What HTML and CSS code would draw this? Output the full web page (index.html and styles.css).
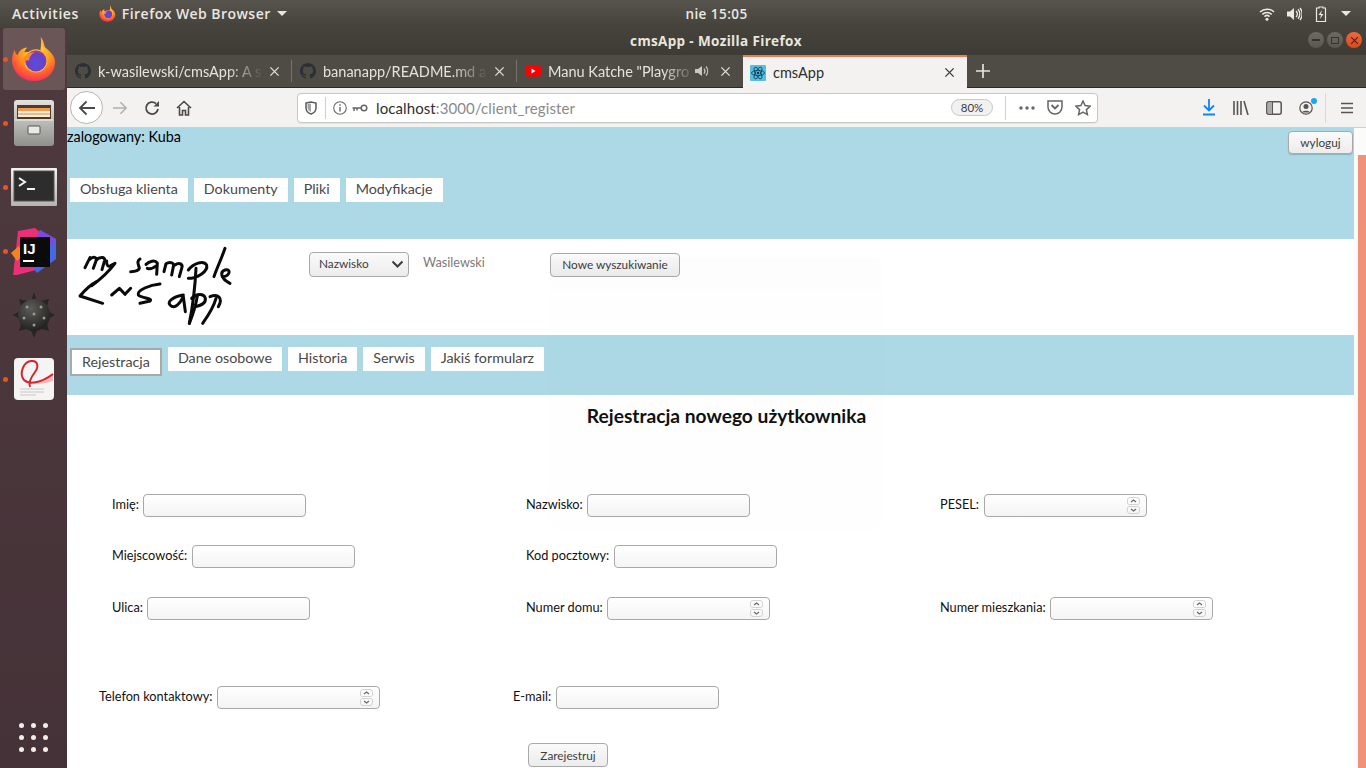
FILE: index.html
```html
<!DOCTYPE html>
<html lang="pl">
<head>
<meta charset="utf-8">
<title>cmsApp</title>
<link rel="stylesheet" href="styles.css">
</head>
<body>
<svg class="defs" width="0" height="0" aria-hidden="true">
  <defs>
    <radialGradient id="ffBody" cx="55%" cy="30%" r="80%">
      <stop offset="0" stop-color="#ffe14d"/><stop offset=".45" stop-color="#ff9a1f"/><stop offset=".75" stop-color="#ff4f3a"/><stop offset="1" stop-color="#e3177e"/>
    </radialGradient>
    <radialGradient id="ffGlobe" cx="50%" cy="60%" r="60%">
      <stop offset="0" stop-color="#5a50d8"/><stop offset=".7" stop-color="#6b3fc8"/><stop offset="1" stop-color="#a335b0"/>
    </radialGradient>
    <linearGradient id="cabinet" x1="0" y1="0" x2="0" y2="1">
      <stop offset="0" stop-color="#e2e2df"/><stop offset="1" stop-color="#8f8f8b"/>
    </linearGradient>
    <linearGradient id="termFrame" x1="0" y1="0" x2="0" y2="1">
      <stop offset="0" stop-color="#f2f2f0"/><stop offset="1" stop-color="#b4b4b1"/>
    </linearGradient>
    <radialGradient id="mine" cx="40%" cy="30%" r="75%">
      <stop offset="0" stop-color="#5c5c58"/><stop offset="1" stop-color="#1e1e1c"/>
    </radialGradient>
    <symbol id="firefox" viewBox="0 0 48 48">
      <path d="M31 1c5 6 2 9 6 12 5 4 9 9 9 14 0 12-10 20-22 20C11 47 2 38 1 26c0-4 1-9 3-12 0 3 1 5 3 6 1-5 6-8 10-8-2 2-3 4-3 5 5-1 12 0 16 3 1-6 2-13 1-19z" fill="url(#ffBody)"/>
      <path d="M14 22c3-6 9-9 14-8 6 1 10 6 10 12 0 7-6 12-12 12-7 0-12-5-12-10 2 1 5 1 6-1-2-1-5-2-6-5z" fill="#ffb52e"/>
      <circle cx="26" cy="26" r="11" fill="url(#ffGlobe)"/>
      <path d="M12 24c3-4 7-7 13-7-4 2-6 5-6 8-2 1-4 1-7-1z" fill="#ff8a24"/>
    </symbol>
    <symbol id="github" viewBox="0 0 16 16">
      <path fill="#2c3034" d="M8 0C3.6 0 0 3.6 0 8c0 3.5 2.3 6.5 5.5 7.6.4.1.5-.2.5-.4v-1.400c-2.200.5-2.700-1-2.700-1-.4-.9-.9-1.200-.9-1.200-.7-.5.1-.5.1-.5.8.1 1.200.8 1.200.8.7 1.200 1.900.9 2.300.7.1-.5.3-.9.5-1.100-1.800-.2-3.600-.9-3.600-4 0-.9.3-1.600.8-2.100-.1-.2-.4-1 .1-2.100 0 0 .7-.2 2.200.8.6-.2 1.300-.3 2-.3s1.400.1 2 .3c1.500-1 2.200-.8 2.200-.8.4 1.100.2 1.900.1 2.100.5.6.8 1.300.8 2.100 0 3.100-1.900 3.700-3.700 3.900.3.3.6.8.6 1.500v2.200c0 .2.1.5.6.4C13.700 14.500 16 11.500 16 8c0-4.400-3.600-8-8-8z"/>
    </symbol>
    <symbol id="close" viewBox="0 0 12 12">
      <path d="M1.500 1.500l9 9M10.500 1.500l-9 9" stroke="currentColor" stroke-width="1.500" fill="none"/>
    </symbol>
    <symbol id="spin" viewBox="0 0 13 17">
      <path d="M.5 3Q.5.500 3 .500H10Q12.500.500 12.500 3V6.500Q12 7.500 10 7.500H3Q1 7.500.5 6.500Z" fill="none" stroke="#c9c9c9" stroke-width=".8"/>
      <path d="M.5 10.500Q1 9.500 3 9.500H10Q12 9.500 12.500 10.500V14Q12.500 16.500 10 16.500H3Q.5 16.500.5 14Z" fill="none" stroke="#c9c9c9" stroke-width=".8"/>
      <path d="M4 5l2.500-2L9 5M4 12l2.500 2L9 12" fill="none" stroke="#666" stroke-width="1.100"/>
    </symbol>
  </defs>
</svg>

<header class="topbar">
  <div class="topbar-left">
    <span class="activities">Activities</span>
    <span class="appmenu">
      <svg class="appmenu-icon"><use href="#firefox"/></svg>
      Firefox Web Browser
      <i class="caret"></i>
    </span>
  </div>
  <div class="clock">nie 15:05</div>
  <div class="tray">
    <svg width="16" height="14" viewBox="0 0 16 14"><path d="M1 5a10 10 0 0 1 14 0M3.300 7.400a6.800 6.800 0 0 1 9.400 0M5.500 9.600a3.600 3.600 0 0 1 5 0" fill="none" stroke="#ece9e2" stroke-width="1.500"/><circle cx="8" cy="12.300" r="1.500" fill="#ece9e2"/></svg>
    <svg width="16" height="14" viewBox="0 0 16 14"><path d="M1 4.500h3L8 1v12L4 9.500H1z" fill="#ece9e2"/><path d="M10 4a4 4 0 0 1 0 6M12 2.300a7 7 0 0 1 0 9.400M14 1a9.500 9.500 0 0 1 0 12" fill="none" stroke="#ece9e2" stroke-width="1.300"/></svg>
    <svg width="12" height="16" viewBox="0 0 12 16"><path d="M4 1h4v1h2.500v13.500h-9V2H4z" fill="none" stroke="#ece9e2" stroke-width="1.200"/><path d="M7 4L3.500 9H6l-1 4 3.500-5H6z" fill="#ece9e2"/></svg>
    <i class="caret"></i>
  </div>
</header>

<div class="desktop">
  <nav class="dock">
    <div class="dock-item selected"><i class="run-dot"></i>
      <svg width="46" height="46"><use href="#firefox"/></svg>
    </div>
    <div class="dock-item"><i class="run-dot"></i>
      <svg width="44" height="48" viewBox="0 0 44 48">
        <rect x="2" y="1" width="40" height="46" rx="3" fill="url(#cabinet)"/>
        <rect x="5" y="6" width="34" height="14" fill="#4f3a2b"/>
        <rect x="6" y="9" width="32" height="3" fill="#f29a4f"/>
        <rect x="6" y="12" width="32" height="6" fill="#f5ecd9"/>
        <path d="M6 15h32" stroke="#e08a3c"/>
        <rect x="3" y="20" width="38" height="2" fill="#d9d9d6"/>
        <rect x="16" y="27" width="12" height="8" rx="1" fill="#e8e8e5" stroke="#555"/>
      </svg>
    </div>
    <div class="dock-item"><i class="run-dot"></i>
      <svg width="46" height="38" viewBox="0 0 46 38">
        <rect width="46" height="38" rx="1" fill="url(#termFrame)"/>
        <rect x="3" y="3" width="40" height="30" fill="#2d2d2d" stroke="#555"/>
        <path d="M8 10l6 4-6 4" fill="none" stroke="#f3f3f3" stroke-width="2"/>
        <rect x="16" y="20" width="8" height="2" fill="#f3f3f3"/>
      </svg>
    </div>
    <div class="dock-item"><i class="run-dot"></i>
      <svg width="48" height="48" viewBox="0 0 48 48">
        <path d="M8 4l17-3 9 8-8 34-23 6z" fill="#ee2f77"/>
        <path d="M30 3l16 9v20L27 46 16 32z" fill="#4468e8"/>
        <path d="M30 3l16 9-6 8-16-4z" fill="#7a4ad8"/>
        <path d="M1 26l8-7 4 9-6 6z" fill="#f58220"/>
        <rect x="10" y="10" width="30" height="30" fill="#0b0b0b"/>
        <text x="13" y="27" class="ij">IJ</text>
        <rect x="13" y="33" width="11" height="2" fill="#fff"/>
      </svg>
    </div>
    <div class="dock-item">
      <svg width="42" height="46" viewBox="0 0 42 46">
        <path d="M21 0l3 10 12-3-3 11 9 5-9 5 3 11-11-3-4 10-4-10-11 3 3-11-9-5 9-5-3-11 12 3z" fill="#262624"/>
        <circle cx="21" cy="23" r="16" fill="url(#mine)"/>
        <g fill="#9a9a94"><circle cx="14" cy="15" r="1.500"/><circle cx="28" cy="15" r="1.500"/><circle cx="21" cy="22" r="1.500"/><circle cx="11" cy="26" r="1.500"/><circle cx="31" cy="26" r="1.500"/><circle cx="21" cy="33" r="1.500"/></g>
      </svg>
    </div>
    <div class="dock-item"><i class="run-dot"></i>
      <svg width="40" height="42" viewBox="0 0 40 42">
        <rect width="40" height="42" rx="4" fill="#f4f4f2"/>
        <path d="M12 23c10 3 18-1 27-8v8c-9 3-19 4-27 0z" fill="#eeb6b6"/>
        <path d="M39 16c-12 9-24 11-29 6C5 16 9 4 17 3c7-1 8 6 4 11-3 4-7 10-5 15" fill="none" stroke="#d8222c" stroke-width="2"/>
        <path d="M6 31h24M6 34h24M6 37h16" stroke="#c8c8c6"/>
      </svg>
    </div>
    <div class="dock-grid">
      <i></i><i></i><i></i><i></i><i></i><i></i><i></i><i></i><i></i>
    </div>
  </nav>

  <main class="window">
    <div class="titlebar">
      <span class="title">cmsApp - Mozilla Firefox</span>
      <div class="winctl">
        <span class="winbtn"><i class="min"></i></span>
        <span class="winbtn"><i class="max"></i></span>
        <span class="winbtn closebtn"><svg width="9" height="9"><use href="#close"/></svg></span>
      </div>
    </div>

    <div class="tabstrip">
      <div class="tab">
        <svg class="favicon"><use href="#github"/></svg>
        <span class="tab-label">k-wasilewski/cmsApp: A s</span>
        <svg class="tab-close"><use href="#close"/></svg>
      </div>
      <div class="tab">
        <svg class="favicon"><use href="#github"/></svg>
        <span class="tab-label">bananapp/README.md a</span>
        <svg class="tab-close"><use href="#close"/></svg>
      </div>
      <div class="tab">
        <svg class="favicon" viewBox="0 0 16 16"><rect y="2.500" width="16" height="11" rx="3" fill="#f00"/><path d="M6.500 5.500v5l4-2.500z" fill="#fff"/></svg>
        <span class="tab-label">Manu Katche "Playgro</span>
        <svg class="tab-audio" viewBox="0 0 14 12"><path d="M0 4h3l4-3v10L3 8H0z" fill="#c9c7c1"/><path d="M9 3.500a4 4 0 0 1 0 5M11 1.500a7 7 0 0 1 0 9" fill="none" stroke="#c9c7c1" stroke-width="1.200"/></svg>
        <svg class="tab-close"><use href="#close"/></svg>
      </div>
      <div class="tab active">
        <svg class="favicon" viewBox="0 0 16 16"><rect width="16" height="16" rx="1" fill="#53c1de"/><g fill="none" stroke="#123a55" stroke-width=".8"><ellipse cx="8" cy="8" rx="6.500" ry="2.600"/><ellipse cx="8" cy="8" rx="6.500" ry="2.600" transform="rotate(60 8 8)"/><ellipse cx="8" cy="8" rx="6.500" ry="2.600" transform="rotate(120 8 8)"/></g><circle cx="8" cy="8" r="1.300" fill="#123a55"/></svg>
        <span class="tab-label">cmsApp</span>
        <svg class="tab-close"><use href="#close"/></svg>
      </div>
      <svg class="newtab" viewBox="0 0 14 14"><path d="M7 0v14M0 7h14" stroke="#e4e2dc" stroke-width="1.700"/></svg>
    </div>

    <div class="toolbar">
      <span class="backbtn">
        <svg width="18" height="16" viewBox="0 0 18 16"><path d="M17 8H2M8.500 1.500L2 8l6.500 6.500" fill="none" stroke="#4a4a4a" stroke-width="1.800"/></svg>
      </span>
      <svg class="tool fwd" width="16" height="14" viewBox="0 0 18 16"><path d="M1 8h15M9.500 1.500L16 8l-6.500 6.500" fill="none" stroke="#b0b0ae" stroke-width="1.800"/></svg>
      <svg class="tool reload" width="16" height="16" viewBox="0 0 16 16"><path d="M14 9a6 6 0 1 1-2-5.500" fill="none" stroke="#4a4a4a" stroke-width="1.800"/><path d="M15 1v5.500H9.500z" fill="#4a4a4a"/></svg>
      <svg class="tool home" width="16" height="16" viewBox="0 0 16 16"><path d="M1 8l7-6.500L15 8M3.500 7v8h3v-4.500h3V15h3V7" fill="none" stroke="#4a4a4a" stroke-width="1.600"/></svg>
      <div class="urlbar">
        <svg class="shield" width="12" height="14" viewBox="0 0 12 14"><path d="M1 2l5-1 5 1v5c0 3-2 5-5 6-3-1-5-3-5-6z" fill="none" stroke="#5a5a5a" stroke-width="1.500"/><path d="M6 2.500V11C4 10 2.500 8.500 2.500 6.500V3z" fill="#5a5a5a" opacity=".55"/></svg>
        <i class="url-sep"></i>
        <svg width="14" height="14" viewBox="0 0 14 14"><circle cx="7" cy="7" r="6.300" fill="none" stroke="#666" stroke-width="1.100"/><path d="M7 6v4.500M7 3.300v1.500" stroke="#666" stroke-width="1.400"/></svg>
        <svg class="key" width="16" height="8" viewBox="0 0 16 8"><circle cx="12" cy="4" r="2.800" fill="none" stroke="#666" stroke-width="1.500"/><path d="M9 4H0.500M2 4v3M5 4v2.500" stroke="#666" stroke-width="1.500" fill="none"/></svg>
        <span class="url"><b>localhost</b>:3000/client_register</span>
        <span class="zoom">80%</span>
        <i class="url-sep tall"></i>
        <svg class="url-more" width="16" height="4" viewBox="0 0 16 4"><g fill="#666"><circle cx="2" cy="2" r="1.700"/><circle cx="8" cy="2" r="1.700"/><circle cx="14" cy="2" r="1.700"/></g></svg>
        <svg class="url-pocket" width="16" height="15" viewBox="0 0 16 15"><path d="M1 1h14v6a7 7 0 0 1-14 0z" fill="none" stroke="#666" stroke-width="1.500"/><path d="M4.500 5L8 8.500 11.500 5" fill="none" stroke="#666" stroke-width="1.800"/></svg>
        <svg width="16" height="16" viewBox="0 0 16 16"><path d="M8 1l2.100 4.600 5 .6-3.700 3.400 1 5L8 12.100 3.600 14.600l1-5L.9 6.200l5-.6z" fill="none" stroke="#666" stroke-width="1.500"/></svg>
      </div>
      <div class="toolbar-right">
        <svg width="14" height="17" viewBox="0 0 14 17"><path d="M7 0v11M2 6.500L7 11.500l5-5M1 15.500h12" fill="none" stroke="#0a84ff" stroke-width="1.800"/></svg>
        <svg width="16" height="14" viewBox="0 0 16 14"><path d="M1 0v14M4.500 0v14M8 0v14M11 0l4 14" fill="none" stroke="#555" stroke-width="1.600"/></svg>
        <svg width="16" height="14" viewBox="0 0 16 14"><rect x=".8" y=".8" width="14.400" height="12.400" rx="2" fill="none" stroke="#555" stroke-width="1.500"/><rect x="2" y="2" width="4" height="10" fill="#aaa"/><path d="M6.500 1v12" stroke="#555"/></svg>
        <span class="account">
          <svg width="14" height="14" viewBox="0 0 14 14"><circle cx="7" cy="7" r="6.200" fill="none" stroke="#555" stroke-width="1.200"/><circle cx="7" cy="5.500" r="2.500" fill="#555"/><path d="M2.800 11.500c1-2.500 7.400-2.500 8.400 0" fill="#555"/></svg>
          <i class="badge"></i>
        </span>
        <i class="toolbar-sep"></i>
        <svg width="12" height="12" viewBox="0 0 12 12"><path d="M0 1.500h12M0 6h12M0 10.500h12" stroke="#555" stroke-width="1.500"/></svg>
      </div>
    </div>

    <div class="viewport">
      <div class="page">
        <section class="band band-top">
          <div class="session">
            <span class="logged">zalogowany: Kuba</span>
            <button class="btn logout" type="button">wyloguj</button>
          </div>
          <div class="menu">
            <a class="menu-item">Obsługa klienta</a>
            <a class="menu-item">Dokumenty</a>
            <a class="menu-item">Pliki</a>
            <a class="menu-item">Modyfikacje</a>
          </div>
        </section>

        <section class="searchrow">
          <svg class="logo" width="170" height="90" viewBox="30 15 510 270" aria-label="my sample cms app">
            <g fill="none" stroke="#0a0a0a" stroke-width="9" stroke-linecap="round" stroke-linejoin="round">
              <path d="M75 98L90 68M88 74C100 62 112 66 108 78L100 100M108 76C120 64 136 66 134 76L126 104"/>
              <path d="M140 78C138 92 146 96 152 92L165 85C150 105 125 130 95 152"/>
              <path d="M110 140C90 150 75 165 60 183L128 205"/>
              <path d="M155 180L178 160L195 178L212 160"/>
              <path d="M240 72C226 80 238 92 238 100C236 106 225 110 212 110"/>
              <path d="M258 88C268 78 285 74 292 84L290 118M262 100C272 104 282 98 290 92"/>
              <path d="M312 110L318 86C330 78 345 84 340 95L335 120M345 90C358 80 370 88 365 100L358 125"/>
              <path d="M385 105C400 85 430 75 440 90C445 110 410 130 385 130M408 100C405 160 398 215 388 265"/>
              <path d="M495 40C485 70 470 100 462 125"/>
              <path d="M487 125C510 125 515 100 495 105C480 110 480 130 510 145"/>
              <path d="M300 147C270 150 230 165 235 180C245 190 280 190 270 198L240 205"/>
              <path d="M370 180C340 185 320 200 330 210C345 225 360 205 370 185L376 230"/>
              <path d="M395 190C410 175 432 175 436 190C438 205 420 212 405 215M412 182C408 210 398 240 388 265"/>
              <path d="M450 185C475 175 490 190 475 215M468 190C460 220 442 245 428 265"/>
            </g>
          </svg>
          <div class="search">
            <span class="select">Nazwisko
              <svg width="13" height="8" viewBox="0 0 13 8"><path d="M1.500 1.500L6.500 6.500l5-5" fill="none" stroke="#3c3c3c" stroke-width="2"/></svg>
            </span>
            <span class="search-value">Wasilewski</span>
            <button class="btn newsearch" type="button">Nowe wyszukiwanie</button>
          </div>
        </section>

        <section class="band band-sub">
          <a class="menu-item current">Rejestracja</a>
          <a class="menu-item">Dane osobowe</a>
          <a class="menu-item">Historia</a>
          <a class="menu-item">Serwis</a>
          <a class="menu-item">Jakiś formularz</a>
        </section>

        <h1 class="heading">Rejestracja nowego użytkownika</h1>

        <form class="form">
          <div class="grid main">
            <label class="field">Imię:<span class="inputwrap"><input class="input"></span></label>
            <label class="field">Nazwisko:<span class="inputwrap"><input class="input"></span></label>
            <label class="field">PESEL:<span class="inputwrap"><input class="input"><svg class="spin"><use href="#spin"/></svg></span></label>
            <label class="field">Miejscowość:<span class="inputwrap"><input class="input"></span></label>
            <label class="field">Kod pocztowy:<span class="inputwrap"><input class="input"></span></label>
            <span></span>
            <label class="field">Ulica:<span class="inputwrap"><input class="input"></span></label>
            <label class="field">Numer domu:<span class="inputwrap"><input class="input"><svg class="spin"><use href="#spin"/></svg></span></label>
            <label class="field">Numer mieszkania:<span class="inputwrap"><input class="input"><svg class="spin"><use href="#spin"/></svg></span></label>
          </div>
          <div class="grid contact">
            <label class="field">Telefon kontaktowy:<span class="inputwrap"><input class="input"><svg class="spin"><use href="#spin"/></svg></span></label>
            <label class="field">E-mail:<span class="inputwrap"><input class="input"></span></label>
          </div>
          <div class="submit"><button class="btn register" type="button">Zarejestruj</button></div>
        </form>

        <div class="ghost" aria-hidden="true">
          <div class="ghost-head"></div>
          <p class="ghost-title">Take Screenshot</p>
          <p class="ghost-opt">Grab the whole screen</p>
          <p class="ghost-opt">Grab the current window</p>
          <p class="ghost-opt">Select area to grab</p>
          <p class="ghost-opt">Grab after a delay of</p>
        </div>
      </div>
      <div class="scrollbar"><i class="thumb"></i></div>
    </div>
  </main>
</div>
</body>
</html>
```
FILE: styles.css
```css
* { box-sizing: border-box; }
html, body { margin: 0; height: 768px; overflow: hidden; }
body { display: flex; flex-direction: column; font-family: "Lato", "Liberation Sans", sans-serif; background: #fff; }
.defs { position: absolute; }
i { display: block; }
svg { flex: none; display: block; }

.topbar { height: 27px; flex: none; display: grid; grid-template-columns: 1fr auto 1fr; align-items: center; background: linear-gradient(#57544d, #45423c); color: #e9e7e1; font: 600 14px "Open Sans", "Noto Sans", sans-serif; }
.topbar-left { display: flex; align-items: center; padding-left: 12px; gap: 20px; }
.activities { letter-spacing: .55px; }
.appmenu { display: flex; align-items: center; gap: 6px; letter-spacing: .45px; }
.appmenu-icon { width: 17px; height: 17px; }
.caret { width: 0; height: 0; border: 5px solid transparent; border-top: 5px solid #e9e7e1; border-bottom: 0; }
.clock { font-size: 13.500px; letter-spacing: .45px; margin-left: 67px; }
.tray { display: flex; justify-content: flex-end; align-items: center; gap: 11px; padding-right: 15px; }
.tray svg:nth-child(2) { margin-right: 2px; }
.tray svg:nth-child(3) { margin-right: 3px; }

.desktop { flex: 1; min-height: 0; display: flex; }
.dock { width: 67px; flex: none; background: linear-gradient(#4e3a3e, #453238); display: flex; flex-direction: column; align-items: center; padding-top: 1px; position: relative; }
.dock-item { position: relative; width: 62px; height: 62px; margin-bottom: 2px; display: flex; align-items: center; justify-content: center; border-radius: 3px; }
.dock-item.selected { background: #6b5657; }
.run-dot { position: absolute; left: 0; top: 29px; width: 5px; height: 5px; border-radius: 50%; background: #e95420; }
.ij { font: 700 15px "Liberation Sans", sans-serif; fill: #fff; }
.dock-grid { margin-top: auto; margin-bottom: 16px; display: grid; grid-template-columns: repeat(3, 5px); gap: 7px; }
.dock-grid i { width: 5px; height: 5px; border-radius: 50%; background: #f1eeea; }

.window { flex: 1; min-width: 0; display: flex; flex-direction: column; background: #fff; }
.titlebar { height: 28px; flex: none; position: relative; display: flex; align-items: center; justify-content: center; background: linear-gradient(#46433d, #3d3b35); color: #e8e6df; font: 700 13.500px "Open Sans", "Noto Sans", sans-serif; letter-spacing: .35px; padding-right: 1px; }
.winctl { position: absolute; right: 4px; top: 5px; display: flex; gap: 3px; }
.winbtn { width: 16px; height: 16px; border-radius: 50%; background: linear-gradient(#6d6b64, #585650); display: flex; align-items: center; justify-content: center; }
.winbtn .min { width: 8px; height: 2px; background: #35332e; }
.winbtn .max { width: 8px; height: 7px; border: 1.500px solid #35332e; }
.closebtn { background: linear-gradient(#f0683a, #d84a1c); color: #4a2410; }

.tabstrip { height: 33px; flex: none; display: flex; align-items: stretch; background: #4f4c45; border-bottom: 1px solid #2d2b27; color: #e4e2dc; }
.tab { width: 225px; display: flex; align-items: center; padding: 0 12px 0 8px; position: relative; font-size: 14.500px; }
.tab + .tab::before { content: ""; position: absolute; left: -1px; top: 5px; bottom: 5px; width: 1px; background: #77746c; }
.tab:nth-child(3) { width: 226px; }
.tab.active { width: 224px; height: 33px; padding-left: 7px; background: #f3f2f0; color: #2e2e2e; border-top: 2px solid #ef7b52; }
.tab.active::before { display: none; }
.favicon { width: 16px; height: 16px; margin-right: 7px; }
.tab-label { flex: 1; min-width: 0; overflow: hidden; white-space: nowrap; -webkit-mask-image: linear-gradient(90deg, #000 78%, rgba(0,0,0,.1) 98%); mask-image: linear-gradient(90deg, #000 78%, rgba(0,0,0,.1) 98%); }
.tab.active .tab-label { -webkit-mask-image: none; mask-image: none; }
.tab-audio { width: 14px; height: 12px; margin-right: 5px; }
.tab-close { width: 11px; height: 11px; margin-left: 6px; color: #dedcd6; }
.tab.active .tab-close { color: #3c3c3c; }
.newtab { width: 14px; height: 14px; align-self: center; margin-left: 9px; }

.toolbar { height: 40px; flex: none; display: flex; align-items: center; background: #f3f2f0; border-bottom: 1px solid #cfcecb; padding-left: 3px; }
.backbtn { width: 33px; height: 33px; border: 1px solid #b5b5b2; border-radius: 50%; background: #fff; display: flex; align-items: center; justify-content: center; }
.tool.fwd { margin-left: 9px; }
.tool.reload { margin-left: 16px; }
.tool.home { margin-left: 16px; }
.urlbar { margin-left: 105px; width: 801px; height: 30px; flex: none; border: 1px solid #c7c7c5; border-radius: 4px; background: #fff; display: flex; align-items: center; padding: 0 6px 0 7px; box-shadow: 0 1px 0 #e6e6e4; }
.url-sep { width: 1px; height: 22px; background: #cfcfcc; margin: 0 7px 0 8px; }
.url-sep.tall { height: 24px; margin: 0 13px 0 12px; }
.key { margin-left: 5px; }
.url { margin-left: 8px; flex: 1; font-size: 15px; color: #8a8a8a; letter-spacing: .1px; }
.url b { font-weight: 400; color: #2f2f2f; }
.zoom { width: 42px; height: 17px; border: 1px solid #c9c9c7; background: #f1f1f0; border-radius: 9px; font-size: 11.500px; color: #3c3c3c; display: flex; align-items: center; justify-content: center; }
.url-pocket { margin: 0 12px; }
.toolbar-right { flex: 1; display: flex; justify-content: flex-end; align-items: center; gap: 17px; padding-right: 13px; }
.account { position: relative; }
.badge { position: absolute; right: -4px; top: -3px; width: 6px; height: 6px; border-radius: 50%; background: #19a6f7; }
.toolbar-sep { width: 1px; height: 30px; background: #d9d8d5; margin-left: -5px; margin-right: -2px; }

.viewport { flex: 1; min-height: 0; display: flex; }
.page { flex: 1; min-width: 0; position: relative; overflow: hidden; font-size: 14px; color: #000; }
.scrollbar { width: 12px; flex: none; background: #fbfbfa; padding: 27px 0 0 4px; }
.scrollbar .thumb { width: 8px; height: 100%; background: #f0917a; }

.band { background: #add8e6; }
.band-top { height: 111px; display: flex; flex-direction: column; }
.session { display: flex; justify-content: space-between; height: 50px; font-size: 14.400px; line-height: 18px; }
.logged { display: block; }
.btn { font-family: inherit; font-size: 11.800px; color: #3d3d3d; border: 1px solid #a9a9a9; border-radius: 4px; background: linear-gradient(#fafafa, #ececec); padding: 0; }
.logout { width: 65px; height: 23px; margin: 3px 1px 0 0; box-shadow: 0 1px 1px rgba(0,0,0,.18); }
.menu { display: flex; gap: 6px; padding-left: 3px; }
.menu-item { height: 24px; padding: 0 10px; background: #fff; color: #484848; font-size: 14.300px; line-height: 22px; }

.searchrow { height: 96px; display: flex; background: #fff; }
.logo { margin: 1px 0 0 3px; }
.search { display: flex; align-items: flex-start; margin-left: 69px; padding-top: 13px; }
.select { width: 100px; height: 25px; border: 1px solid #a9a9a9; border-radius: 4px; background: linear-gradient(#fafafa, #ececec); font-size: 11.800px; color: #3d3d3d; display: flex; align-items: center; justify-content: space-between; padding: 0 4px 2px 9px; }
.select svg { margin-top: 1px; }
.search-value { width: 127px; margin-left: 14px; color: #7b7b7b; font-size: 12.700px; line-height: 21px; }
.newsearch { width: 130px; height: 24px; margin-top: 1px; padding-bottom: 2px; }

.band-sub { height: 60px; display: flex; align-items: flex-start; gap: 6px; padding: 12px 0 0 3px; }
.menu-item.current { height: 28px; padding: 0 10px; line-height: 23px; border: 2px solid #a9a9a9; margin-top: 1px; }

.heading { margin: 10px 0 0; padding-left: 32px; height: 22px; text-align: center; font-size: 19.200px; line-height: 22px; font-weight: 700; color: #111; }

.form { padding-top: 67px; font-size: 12.750px; }
.grid { display: grid; grid-template-columns: repeat(3, 414px); grid-auto-rows: 51px; padding-left: 45px; }
.grid.main { grid-template-rows: 51px 52px 51px; }
.grid.contact { padding-left: 32px; margin-top: 38px; }
.field { display: flex; align-items: flex-start; white-space: nowrap; line-height: 20px; color: #111; }
.inputwrap { position: relative; display: block; margin-left: 4.500px; }
.input { display: block; width: 163px; height: 23px; border: 1px solid #a9a9a9; border-radius: 4px; background: linear-gradient(#fff, #f4f4f4); padding: 0 6px; }
.spin { position: absolute; right: 7px; top: 3px; width: 13px; height: 17px; }
.submit { padding: 6px 0 0 461px; }
.register { width: 80px; height: 24px; }

.ghost { position: absolute; left: 483px; top: 130px; width: 332px; height: 272px; background: rgba(0,0,0,.004); border-radius: 6px; padding: 42px 8px 0 20px; font-size: 11px; }
.ghost p { margin: 0 0 6px; line-height: 14px; color: rgba(0,0,0,.018); }
.ghost .ghost-title { font-weight: 700; }
.ghost .ghost-opt { padding-left: 50px; }
.ghost-head { position: absolute; left: 0; right: 0; top: 0; height: 32px; background: rgba(0,0,0,.004); border-radius: 6px 6px 0 0; }
```
